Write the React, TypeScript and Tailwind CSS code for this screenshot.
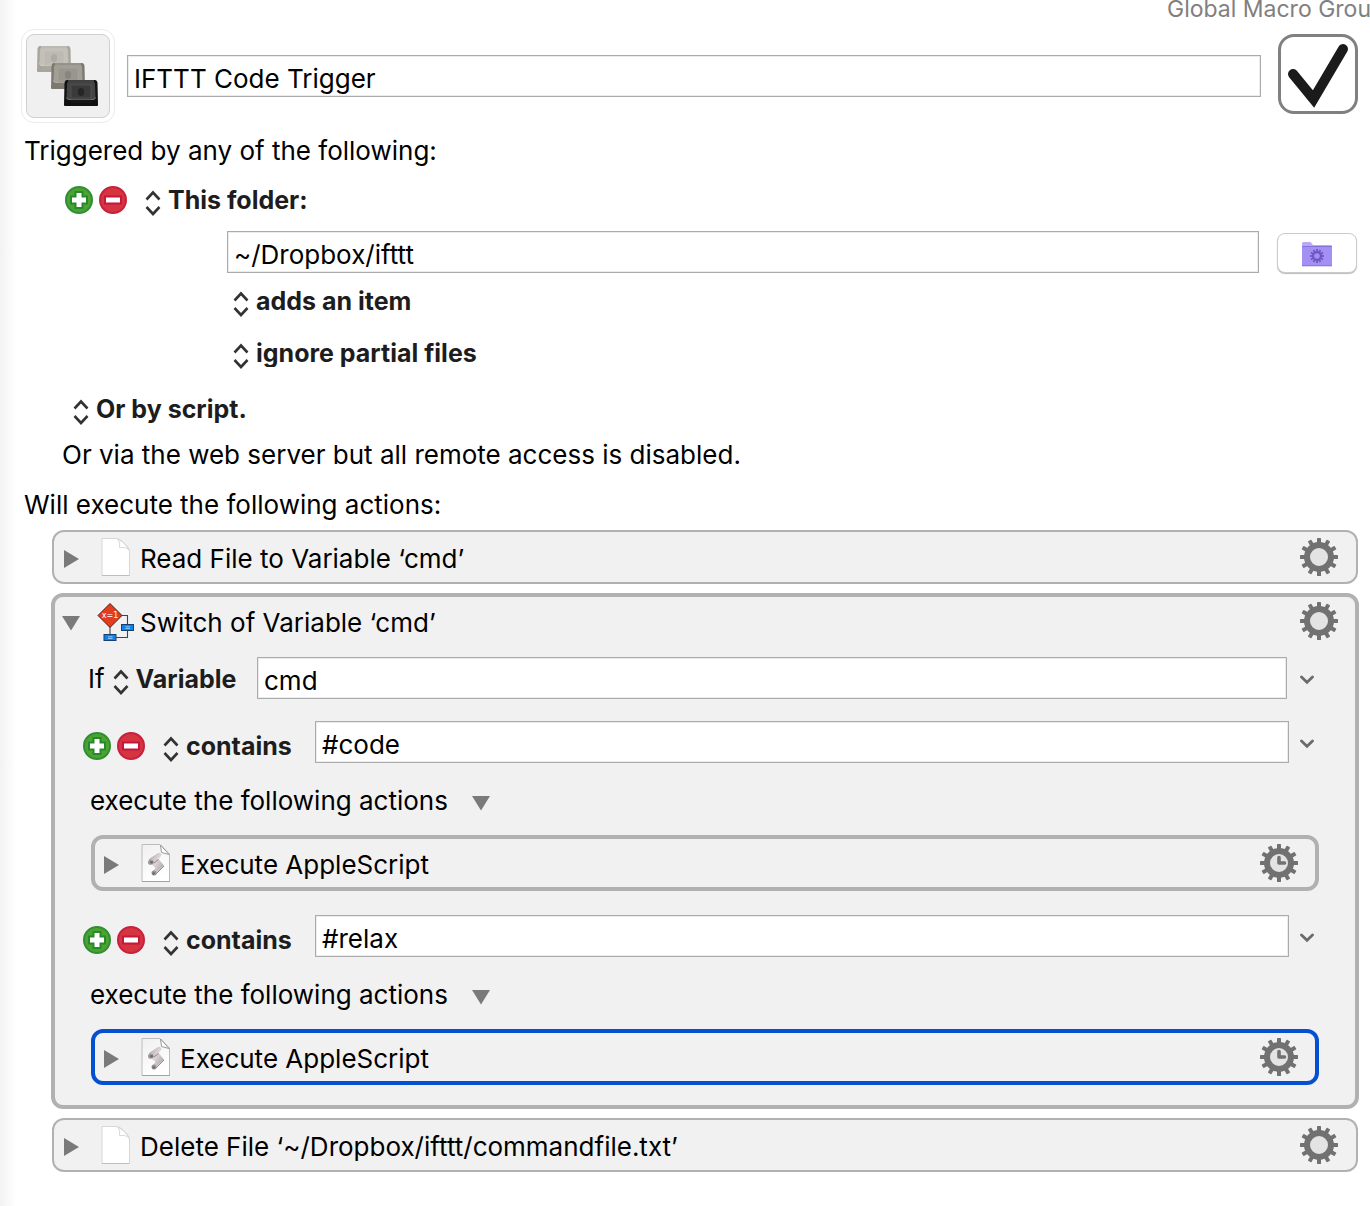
import { type ReactNode } from "react";

const teeth = [0, 30, 60, 90, 120, 150, 180, 210, 240, 270, 300, 330];

function Gear({ clock }: { clock?: boolean }) {
  return (
    <button type="button" aria-label="Action options" className="ml-auto block shrink-0">
      <svg width="38" height="38" viewBox="0 0 38 38" className="block">
        {teeth.map((a) => (
          <rect key={a} x="17" y="0" width="4" height="8" rx="0.5" fill="#717171" transform={`rotate(${a} 19 19)`} />
        ))}
        <circle cx="19" cy="19" r="12" fill="#e3e3e3" stroke="#717171" strokeWidth="6" />
        {clock && <path d="M19 13.500V19H24.500" fill="none" stroke="#717171" strokeWidth="3.6" strokeLinecap="round" strokeLinejoin="round" />}
      </svg>
    </button>
  );
}

function Disclosure({ open, label }: { open?: boolean; label: string }) {
  return (
    <button type="button" aria-label={label} aria-expanded={!!open} className="mt-1 block shrink-0">
      <svg width="18" height="18" viewBox="0 0 18 18" fill="#7a7a7a" className="block">
        <path d={open ? "M0 2H18L9 16.5Z" : "M2 0L17 9L2 18Z"} />
      </svg>
    </button>
  );
}

function PlusMinus() {
  return (
    <div className="flex shrink-0 gap-[6px]">
      <button type="button" aria-label="Add" className="block">
        <svg width="28" height="28" viewBox="0 0 28 28" className="block">
          <circle cx="14" cy="14" r="13" fill="#4da32f" stroke="#2f8f33" strokeWidth="2" />
          <path d="M14 5V23M5 14H23" stroke="#268a2c" strokeWidth="9" />
          <path d="M14 7V21M7 14H21" stroke="#fff" strokeWidth="5" />
        </svg>
      </button>
      <button type="button" aria-label="Remove" className="block">
        <svg width="28" height="28" viewBox="0 0 28 28" className="block">
          <circle cx="14" cy="14" r="13" fill="#d6343f" stroke="#c8203f" strokeWidth="2" />
          <path d="M5 14H23" stroke="#c3173d" strokeWidth="9" />
          <path d="M7 14H21" stroke="#fff" strokeWidth="5" />
        </svg>
      </button>
    </div>
  );
}

function Picker({ label, value }: { label: string; value: string }) {
  return (
    <label className="flex h-7 shrink-0 items-center gap-[7px]">
      <svg width="16" height="26" viewBox="0 0 16 26" fill="none" stroke="#333" strokeWidth="2.6" className="mt-[6px] block">
        <path d="M1.5 9.5L8 2.5L14.5 9.5M1.5 17L8 24L14.5 17" />
      </svg>
      <select aria-label={label} className="appearance-none bg-transparent text-[25px] leading-7 font-bold text-[#1d1d1d] outline-none">
        <option>{value}</option>
      </select>
    </label>
  );
}

function Field({ label, value }: { label: string; value: string }) {
  return (
    <input
      aria-label={label}
      defaultValue={value}
      className="h-[42px] min-w-0 flex-1 border border-[#ababab] bg-white px-[6px] pt-1 text-[26px] text-black shadow-[inset_0_0_0_1px_#ececec] outline-none"
    />
  );
}

function Chevron() {
  return (
    <button type="button" aria-label="Insert token" className="mt-[3px] block shrink-0">
      <svg width="14" height="10" viewBox="0 0 14 10" fill="none" stroke="#6b6b6b" strokeWidth="2.8" strokeLinecap="round" className="block">
        <path d="M1.5 2L7 7.2L12.5 2" />
      </svg>
    </button>
  );
}

function FileIcon() {
  return (
    <svg width="36" height="40" viewBox="0 0 36 40" className="block">
      <defs>
        <linearGradient id="fold" x1="0" y1="1" x2="1" y2="0">
          <stop offset="0.5" stopColor="#fff" />
          <stop offset="1" stopColor="#dcdcdc" />
        </linearGradient>
      </defs>
      <path d="M5 1.500H19Q23 2 25 4L30 9Q32.500 12 32.500 15V38.500H5Z" fill="#fff" stroke="#d6d6d6" />
      <path d="M21 2Q23.500 6 22.500 10.500Q28 9.500 32 12.500L27 6Z" fill="url(#fold)" stroke="#cfcfcf" strokeWidth="0.8" />
      <path d="M5 38.500H32.500" stroke="#bdbdbd" />
    </svg>
  );
}

function ScriptIcon() {
  return (
    <svg width="36" height="40" viewBox="0 0 36 40" className="block">
      <defs>
        <linearGradient id="scroll" x1="0" y1="0" x2="1" y2="0.8">
          <stop offset="0" stopColor="#a9a1a2" />
          <stop offset="0.5" stopColor="#ddd5d6" />
          <stop offset="1" stopColor="#aaa2a3" />
        </linearGradient>
        <linearGradient id="sheet" x1="0" y1="0" x2="0.4" y2="1">
          <stop offset="0" stopColor="#f0f0f0" />
          <stop offset="1" stopColor="#fff" />
        </linearGradient>
      </defs>
      <path d="M5 1.500H23L32.500 11V38.500H5Z" fill="url(#sheet)" stroke="#bcbcbc" />
      <path d="M23.500 2L32 11.500L24.500 9.500Z" fill="#fff" stroke="#8f8f8f" strokeWidth="0.9" />
      <path d="M5 38.500H33" stroke="#a2a2a2" />
      <path d="M12 16L21 10Q24 9 24.500 12L21.500 16L27 22.500L18 31L15.500 28.500L18.500 25L13 20Z" fill="url(#scroll)" />
      <path d="M11 18.500Q12 15.500 15 17Q17.500 18 16.500 20.500L13.500 22Q10.500 21.500 11 18.500Z" fill="#a39b9c" />
      <ellipse cx="14.500" cy="19.300" rx="1.500" ry="1.200" fill="#6f696a" />
      <path d="M17 20L21.500 16.500" stroke="#8d8687" strokeWidth="1" />
      <circle cx="17" cy="30" r="2.500" fill="#9a9394" />
      <circle cx="16.700" cy="30.500" r="1.200" fill="#6f696a" />
      <path d="M18.500 31.500L27 23" stroke="#918b8c" strokeWidth="1" />
    </svg>
  );
}

function SwitchIcon() {
  return (
    <svg width="38" height="40" viewBox="0 0 38 40" className="mt-[2px] -mr-[2px] block">
      <path d="M13 22V34M24 13.500H30.500V35.500H19" fill="none" stroke="#444" strokeWidth="1.100" />
      <path d="M13 1.500L25 13.500L13 25.500L1 13.500Z" fill="#e33c1e" stroke="#4c2018" strokeWidth="1" />
      <text x="13" y="16" textAnchor="middle" fontSize="8" fill="#fff" fontFamily="DejaVu Sans">x=1</text>
      <rect x="24.500" y="22.500" width="12" height="6" fill="#0a84f5" stroke="#17406e" />
      <rect x="7" y="32.500" width="12" height="6" fill="#0a84f5" stroke="#17406e" />
      <path d="M28.500 24.800H33M28.500 26.500H33M11 34.800H15.500M11 36.500H15.500" stroke="#a9d6ff" strokeWidth="0.8" />
    </svg>
  );
}

function Keycap({ x, y, body, face, edge, mark }: { x: number; y: number; body: string; face: string; edge: string; mark: string }) {
  return (
    <g transform={`translate(${x} ${y})`}>
      <path d="M3 0H31Q33 0 33.500 3L34 25Q34 26 33 26H1Q0 26 0 25L0.500 3Q1 0 3 0Z" fill={body} />
      <path d="M4.500 2H29.500Q31 2 31 4L31.500 18Q31 19.500 29 19.500H5Q3 19.500 2.500 18L3 4Q3 2 4.500 2Z" fill={face} />
      <path d="M2.500 17.500Q3 19.500 5 19.500H29Q31 19.500 31.500 17.500M4 1H30" fill="none" stroke={edge} strokeWidth="0.9" />
      <rect x="7" y="5" width="20" height="18" fill={mark} fillOpacity="0.3" />
      <rect x="7" y="5" width="20" height="13" fill="none" stroke={edge} strokeWidth="0.5" strokeOpacity="0.6" />
      <ellipse cx="17" cy="12" rx="3.200" ry="4" fill={mark} />
    </g>
  );
}

function MacroIcon() {
  return (
    <button type="button" aria-label="Macro icon" className="-ml-px block size-[94px] shrink-0 rounded-[13px] border border-[#ececec] bg-white p-1">
      <div className="size-full rounded-lg border border-[#d0d0d0] bg-[#f0f0f0]">
        <svg viewBox="0 0 82 82" className="block size-full">
          <Keycap x={10} y={11} body="#a8a59d" face="#c3c0b9" edge="#d4d2cb" mark="#aeaba3" />
          <Keycap x={24} y={28} body="#7d7971" face="#a19e96" edge="#b5b2aa" mark="#88857d" />
          <Keycap x={37} y={45} body="#111" face="#444" edge="#7c7c7c" mark="#262626" />
        </svg>
      </div>
    </button>
  );
}

function FolderIcon() {
  return (
    <svg width="32" height="27" viewBox="0 0 32 27" className="mt-[2px] block">
      <path d="M1 2.500Q1 1 2.500 1H9.500L12 4H29.500Q31 4 31 5.500V24Q31 25 30 25H2Q1 25 1 24Z" fill="#b9a9f8" />
      <path d="M1 6H31V24Q31 25 30 25H2Q1 25 1 24Z" fill="#a48ff2" />
      <path d="M1 5.500H31M1 24.800H31" stroke="#8774d6" />
      <g stroke="#6e59c4" fill="none">
        {teeth.map((a) => (
          <path key={a} d="M16 8V11" strokeWidth="1.8" transform={`rotate(${a} 16 15)`} />
        ))}
        <circle cx="16" cy="15" r="3.900" strokeWidth="2.200" />
      </g>
    </svg>
  );
}

function CardHeader({ icon, title, open, clock }: { icon: ReactNode; title: string; open?: boolean; clock?: boolean }) {
  return (
    <div className="flex h-[46px] items-center">
      <Disclosure open={open} label={title} />
      <div className="ml-[17px] shrink-0">{icon}</div>
      <h2 className="ml-[7px] truncate pt-[3px]">{title}</h2>
      <Gear clock={clock} />
    </div>
  );
}

function Case({ value, selected }: { value: string; selected?: boolean }) {
  return (
    <section>
      <div className="flex items-center pr-[41px] pl-7">
        <div className="flex w-[232px] shrink-0 items-center gap-[18px] pt-[7px]">
          <PlusMinus />
          <Picker label="Condition" value="contains" />
        </div>
        <Field label="Text to match" value={value} />
        <div className="ml-[11px]"><Chevron /></div>
      </div>
      <div className="mt-[23px] flex items-center gap-6 pl-[35px]">
        <p>execute the following actions</p>
        <Disclosure open label="Case actions" />
      </div>
      <div
        className={
          selected
            ? "mx-9 mt-[19px] rounded-xl border-4 border-[#0550d0] py-px pr-[17px] pl-[7px]"
            : "mx-9 mt-[19px] rounded-xl border-4 border-[#b1b1b1] py-px pr-[17px] pl-[7px]"
        }
      >
        <CardHeader icon={<ScriptIcon />} title="Execute AppleScript" clock />
      </div>
    </section>
  );
}

export default function App() {
  return (
    <main className="min-h-screen bg-[linear-gradient(to_right,#f3f3f3,#fff_16px)] pr-3 pb-[34px] pl-[22px] font-[Inter,'Liberation_Sans',Arial,sans-serif] text-[26px] leading-[30px] text-black">
      <header className="-mr-3 flex h-[29px] justify-end overflow-hidden">
        <p className="-mt-[6px] w-[203px] overflow-hidden text-[23px] whitespace-nowrap text-[#808080]">Global Macro Group</p>
      </header>

      <div className="flex items-center">
        <MacroIcon />
        <div className="ml-3 flex min-w-0 flex-1">
          <Field label="Macro name" value="IFTTT Code Trigger" />
        </div>
        <label className="relative -mt-1 ml-[17px] block size-20 shrink-0">
          <input type="checkbox" defaultChecked aria-label="Macro enabled" className="peer block size-20 appearance-none rounded-2xl border-3 border-[#808080] bg-white" />
          <svg viewBox="0 0 80 80" className="pointer-events-none absolute inset-0 hidden peer-checked:block">
            <path d="M15 40L35.500 65L65 15" fill="none" stroke="#1b1b1b" strokeWidth="10" strokeLinecap="round" />
          </svg>
        </label>
      </div>

      <p className="mt-[13px] ml-[2px]">Triggered by any of the following:</p>

      <div className="mt-5 ml-[43px] flex items-center gap-[18px]">
        <PlusMinus />
        <Picker label="Trigger type" value="This folder:" />
      </div>
      <div className="mt-[17px] flex items-center pr-px pl-[205px]">
        <Field label="Folder path" value="~/Dropbox/ifttt" />
        <button type="button" aria-label="Choose folder" className="mt-[2px] ml-[18px] flex h-10 w-20 shrink-0 items-center justify-center rounded-lg border border-[#cbcbcb] bg-white shadow-[0_1px_1px_#bbb]">
          <FolderIcon />
        </button>
      </div>
      <div className="mt-[14px] ml-[211px] flex flex-col items-start gap-6">
        <Picker label="Folder event" value="adds an item" />
        <Picker label="Partial files" value="ignore partial files" />
      </div>
      <div className="mt-7 ml-[51px] flex">
        <Picker label="Script trigger" value="Or by script." />
      </div>
      <p className="mt-[17px] ml-10">Or via the web server but all remote access is disabled.</p>
      <p className="mt-5 ml-[2px]">Will execute the following actions:</p>

      <div className="mt-[10px] ml-[30px] flex flex-col gap-[9px]">
        <div className="rounded-xl border-2 border-[#b1b1b1] bg-[#f1f1f1] py-[2px] pr-[18px] pl-2">
          <CardHeader icon={<FileIcon />} title="Read File to Variable ‘cmd’" />
        </div>

        <div className="-mx-px rounded-xl border-4 border-[#b1b1b1] bg-[#f1f1f1] pt-px pb-5">
          <div className="pr-[17px] pl-[7px]">
            <CardHeader icon={<SwitchIcon />} title="Switch of Variable ‘cmd’" open />
          </div>
          <div className="mt-[13px] flex items-center pr-[41px] pl-[33px]">
            <div className="flex w-[169px] shrink-0 items-center gap-2 pt-[2px]">
              <span>If</span>
              <Picker label="Switch source" value="Variable" />
            </div>
            <Field label="Variable name" value="cmd" />
            <div className="ml-[13px]"><Chevron /></div>
          </div>
          <div className="mt-[22px] flex flex-col gap-6">
            <Case value="#code" />
            <Case value="#relax" selected />
          </div>
        </div>

        <div className="rounded-xl border-2 border-[#b1b1b1] bg-[#f1f1f1] py-[2px] pr-[18px] pl-2">
          <CardHeader icon={<FileIcon />} title="Delete File ‘~/Dropbox/ifttt/commandfile.txt’" />
        </div>
      </div>
    </main>
  );
}
